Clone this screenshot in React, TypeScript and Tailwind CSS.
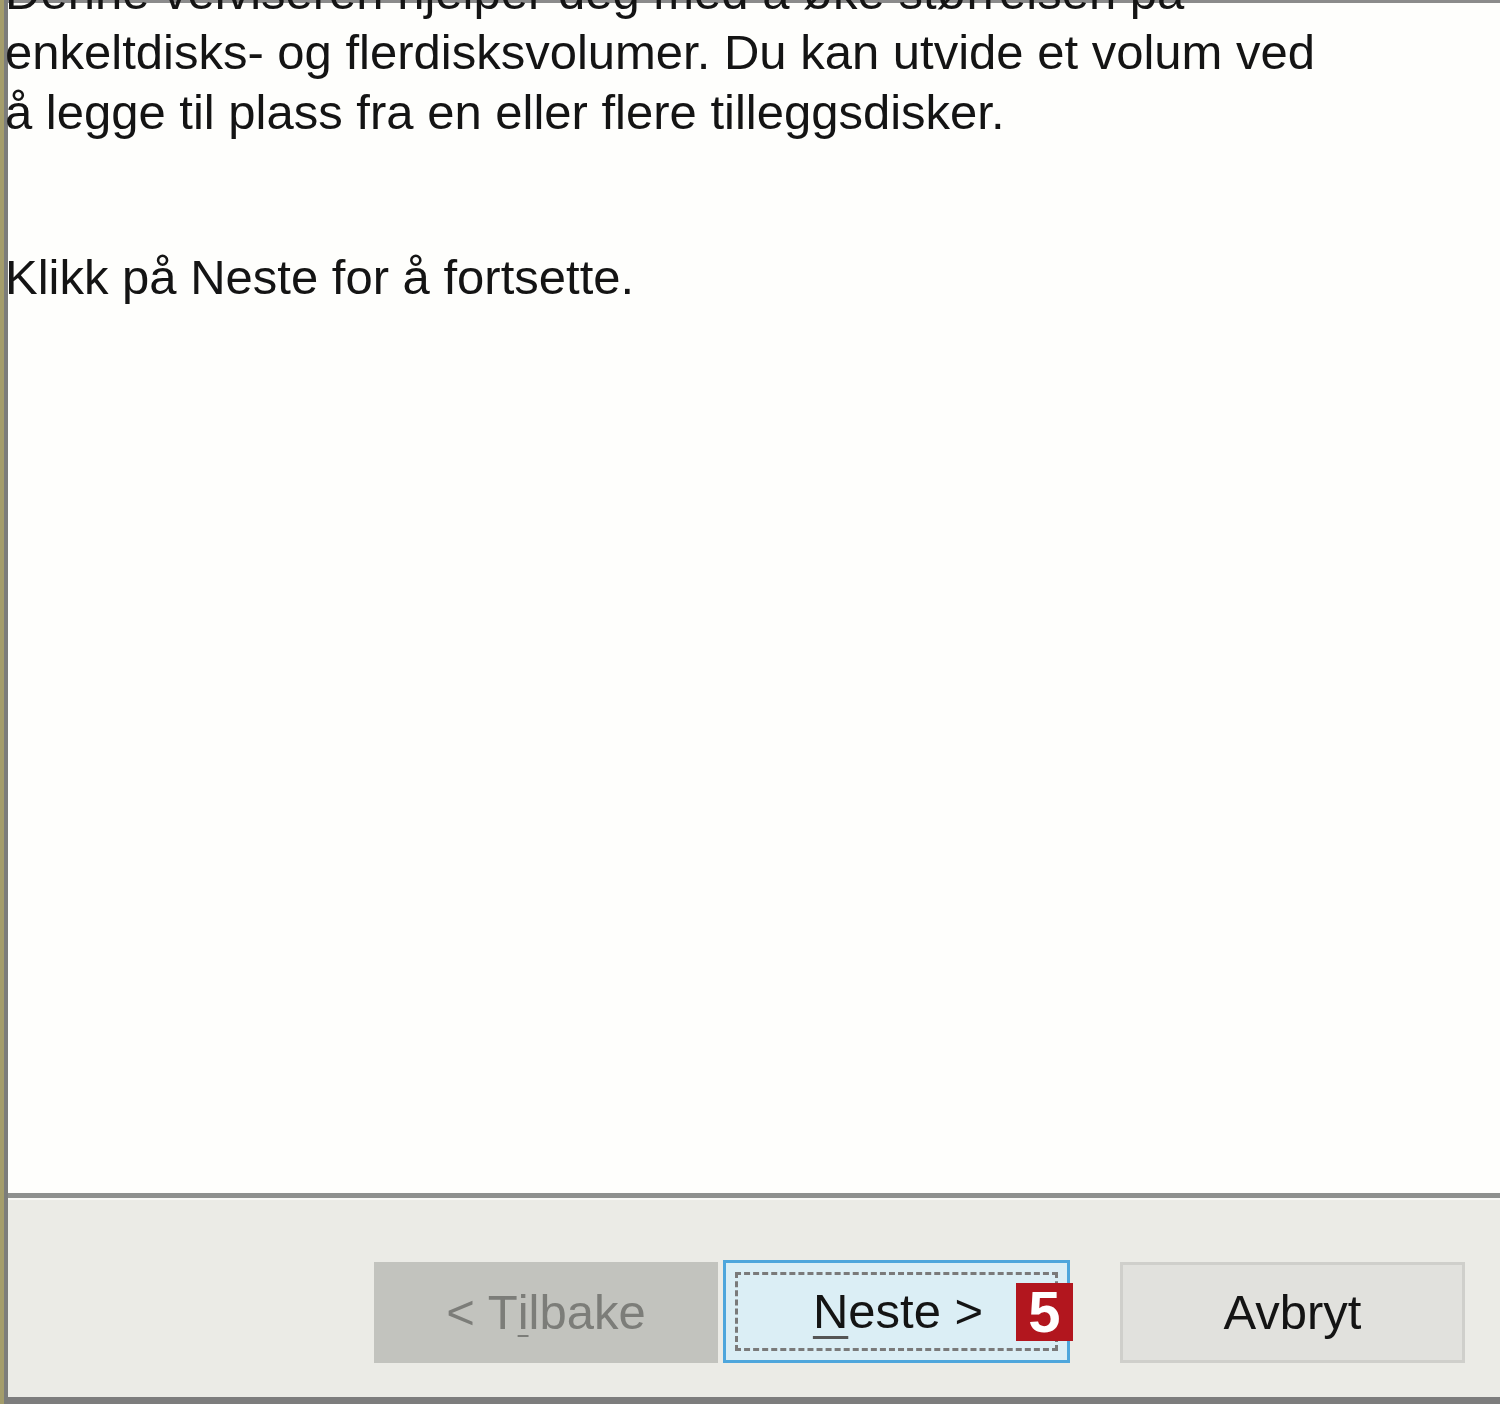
export default function App() {
  return (
    <div className="w-[1500px] h-[1404px] flex bg-[#fefefc] font-['Liberation_Sans',Arial,sans-serif] text-[#141414] overflow-hidden">
      {/* left window frame */}
      <div className="w-[4px] bg-[#a49d6b]" />
      <div className="w-[4px] bg-[#7c7d7b]" />

      <div className="flex-1 flex flex-col">
        {/* wizard body */}
        <div className="h-[1193px] border-t-[3px] border-[#8b8b8b] bg-[#fefefc]">
          <div className="-ml-[3px] -mt-[41px] text-[49px] leading-[60px]">
            <p>
              Denne veiviseren hjelper deg med å øke størrelsen på
              <br />
              enkeltdisks- og flerdisksvolumer. Du kan utvide et volum ved
              <br />
              å legge til plass fra en eller flere tilleggsdisker.
            </p>
            <p className="mt-[105px]">Klikk på Neste for å fortsette.</p>
          </div>
        </div>

        {/* separator */}
        <div className="h-[5px] bg-[#8e908e]" />
        <div className="h-[2px] bg-[#f8f8f5]" />

        {/* button bar */}
        <div className="h-[197px] bg-[#ebebe6] flex justify-end items-start pt-[60px] pr-[35px]">
          <button className="mt-[2px] w-[344px] h-[101px] bg-[#c2c3be] text-[#7c7d79] text-[49px] flex items-center justify-center">
            &lt; T<span className="underline decoration-2 underline-offset-[6px]">i</span>lbake
          </button>

          <div className="relative ml-[5px] w-[347px] h-[103px] border-[3px] border-[#4ea6dc] bg-[#dbeef5] p-[9px]">
            <div className="w-full h-full border-[3px] border-dashed border-[#7a7a7a] flex items-center justify-center text-[49px]">
              <span className="ml-[3px]">
                <span className="underline decoration-[3px] underline-offset-[8px] decoration-[#555]">N</span>este &gt;
              </span>
            </div>
            <div className="absolute left-[290px] top-[20px] w-[57px] h-[58px] bg-[#b2161e] text-white font-bold text-[58px] leading-none flex items-center justify-center">
              5
            </div>
          </div>

          <button className="ml-[50px] mt-[2px] w-[345px] h-[101px] bg-[#e1e1dd] border-[3px] border-[#cfcfcb] text-[49px] flex items-center justify-center">
            Avbryt
          </button>
        </div>

        {/* bottom frame */}
        <div className="h-[7px] bg-[#7d7d7d]" />
      </div>
    </div>
  );
}
